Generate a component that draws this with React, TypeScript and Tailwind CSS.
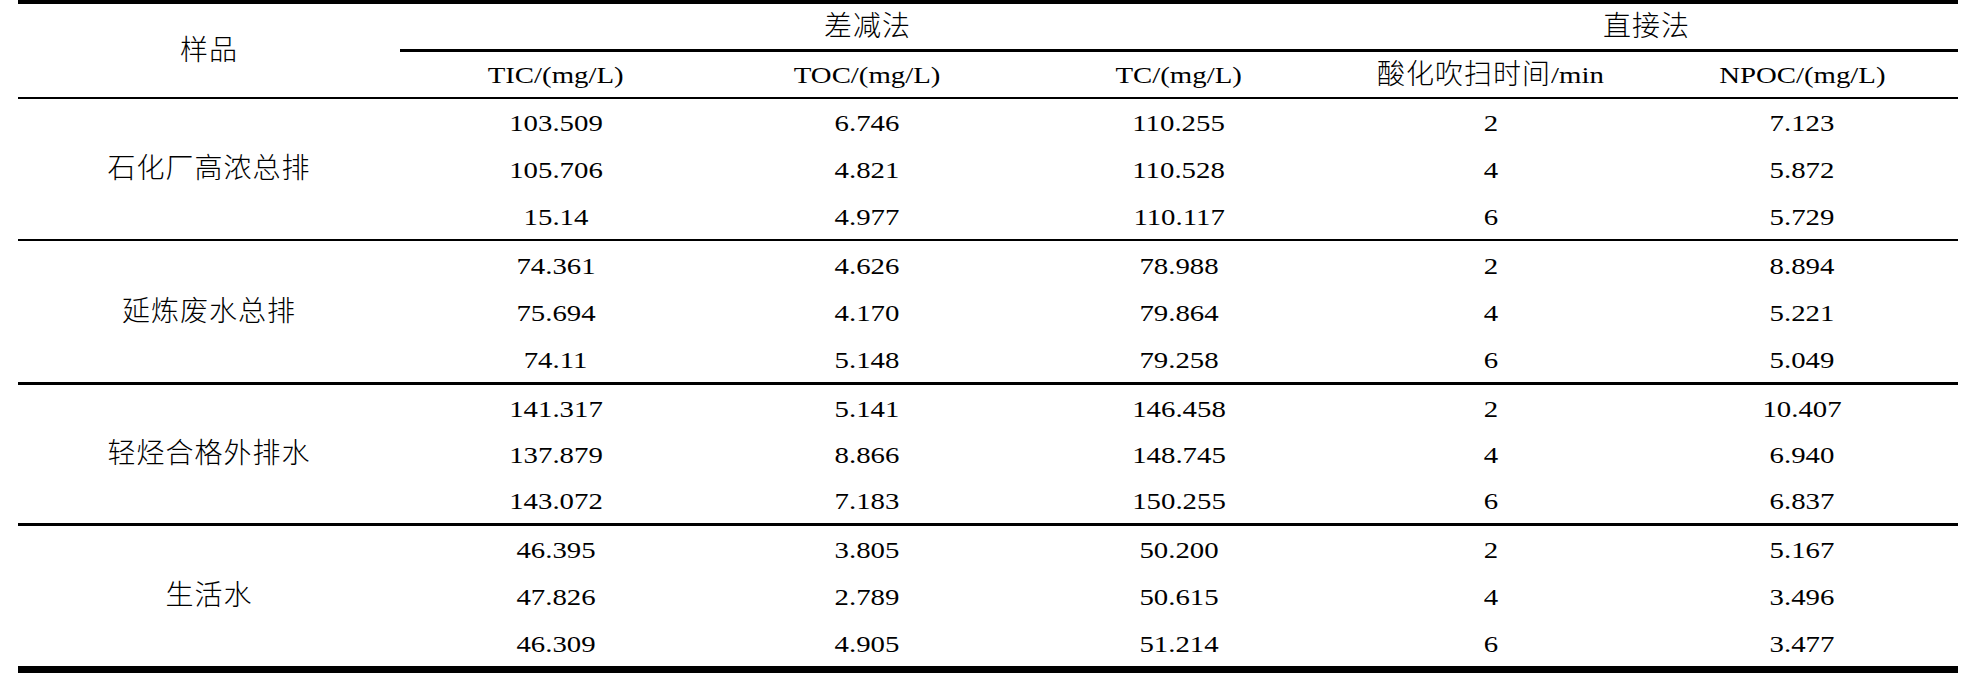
const cols = ['TIC/(mg/L)', 'TOC/(mg/L)', 'TC/(mg/L)'];

type Group = {
  name: string;
  height: string;
  rows: string[][];
};

const groups: Group[] = [
  {
    name: '石化厂高浓总排',
    height: 'h-[140px]',
    rows: [
      ['103.509', '6.746', '110.255', '2', '7.123'],
      ['105.706', '4.821', '110.528', '4', '5.872'],
      ['15.14', '4.977', '110.117', '6', '5.729'],
    ],
  },
  {
    name: '延炼废水总排',
    height: 'h-[141px]',
    rows: [
      ['74.361', '4.626', '78.988', '2', '8.894'],
      ['75.694', '4.170', '79.864', '4', '5.221'],
      ['74.11', '5.148', '79.258', '6', '5.049'],
    ],
  },
  {
    name: '轻烃合格外排水',
    height: 'h-[138px]',
    rows: [
      ['141.317', '5.141', '146.458', '2', '10.407'],
      ['137.879', '8.866', '148.745', '4', '6.940'],
      ['143.072', '7.183', '150.255', '6', '6.837'],
    ],
  },
  {
    name: '生活水',
    height: 'h-[140px]',
    rows: [
      ['46.395', '3.805', '50.200', '2', '5.167'],
      ['47.826', '2.789', '50.615', '4', '3.496'],
      ['46.309', '4.905', '51.214', '6', '3.477'],
    ],
  },
];

// separators under each group (px thickness differs slightly in the source)
const seps = ['h-[2px]', 'h-[3px]', 'h-[3px]', 'h-[7px]'];

function Zh({ children }: { children: React.ReactNode }) {
  return <span className="text-[28px] tracking-[1px]">{children}</span>;
}

// source glyphs are stretched sideways, so scale the latin text a bit
function Num({ children }: { children: React.ReactNode }) {
  return <span className="inline-block text-[24px] scale-x-120">{children}</span>;
}

export default function App() {
  return (
    <div
      className="w-[1974px] h-[681px] bg-white text-black overflow-hidden"
      style={{ fontFamily: '"Liberation Serif", "Noto Sans CJK SC", serif' }}
    >
      <div className="ml-[18px] w-[1940px] font-light leading-none">
        {/* top rule */}
        <div className="h-[4px] bg-black" />

        {/* header */}
        <div className="flex h-[93px]">
          <div className="w-[382px] flex items-center justify-center">
            <Zh>样品</Zh>
          </div>
          <div className="flex-1 flex flex-col">
            <div className="flex h-[48px] border-b-[3px] border-black">
              <div className="w-[934.8px] flex items-center justify-center">
                <Zh>差减法</Zh>
              </div>
              <div className="flex-1 flex items-center justify-center">
                <Zh>直接法</Zh>
              </div>
            </div>
            <div className="grid grid-cols-5 flex-1">
              {cols.map((c) => (
                <div key={c} className="flex items-center justify-center">
                  <Num>{c}</Num>
                </div>
              ))}
              <div className="flex items-center justify-center">
                <Zh>酸化吹扫时间</Zh>
                <span className="inline-block text-[24px] scale-x-120 origin-left mr-[9px]">/min</span>
              </div>
              <div className="flex items-center justify-center">
                <Num>NPOC/(mg/L)</Num>
              </div>
            </div>
          </div>
        </div>
        <div className="h-[2px] bg-black" />

        {groups.map((g, gi) => (
          <div key={g.name}>
            <div className={`flex ${g.height}`}>
              <div className="w-[382px] flex items-center justify-center">
                <Zh>{g.name}</Zh>
              </div>
              <div className="flex-1 flex flex-col">
                {g.rows.map((r, ri) => (
                  <div key={ri} className="grid grid-cols-5 flex-1">
                    {r.map((v, vi) => (
                      <div key={vi} className="flex items-center justify-center pt-[2px]">
                        <Num>{v}</Num>
                      </div>
                    ))}
                  </div>
                ))}
              </div>
            </div>
            <div className={`${seps[gi]} bg-black`} />
          </div>
        ))}
      </div>
    </div>
  );
}
